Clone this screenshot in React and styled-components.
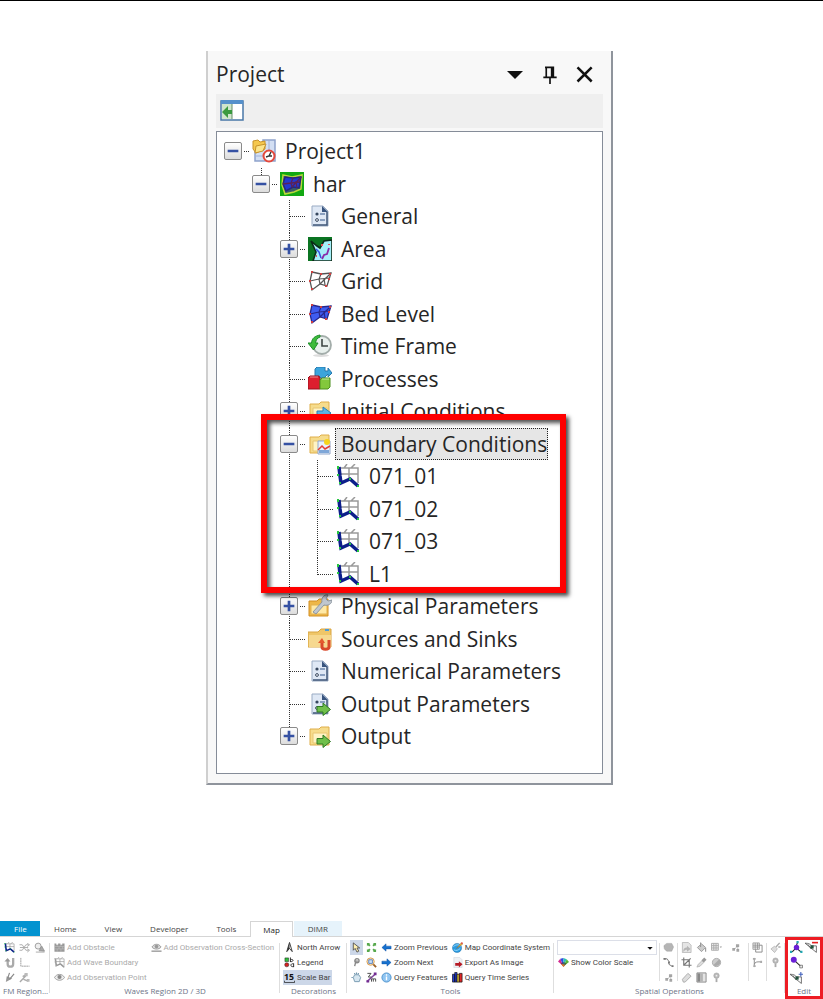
import { useState } from "react";
import styled, { createGlobalStyle, css } from "styled-components";

const treeItems = [
  { name: "Project1", depth: 0, icon: "project", toggle: "minus", last: true },
  { name: "har", depth: 1, icon: "model", toggle: "minus", last: true },
  { name: "General", depth: 2, icon: "sheet" },
  { name: "Area", depth: 2, icon: "area", toggle: "plus" },
  { name: "Grid", depth: 2, icon: "grid" },
  { name: "Bed Level", depth: 2, icon: "bed" },
  { name: "Time Frame", depth: 2, icon: "time" },
  { name: "Processes", depth: 2, icon: "cubes" },
  { name: "Initial Conditions", depth: 2, icon: "initial", toggle: "plus" },
  { name: "Boundary Conditions", depth: 2, icon: "boundary", toggle: "minus" },
  { name: "071_01", depth: 3, icon: "wave" },
  { name: "071_02", depth: 3, icon: "wave" },
  { name: "071_03", depth: 3, icon: "wave" },
  { name: "L1", depth: 3, icon: "wave", last: true },
  { name: "Physical Parameters", depth: 2, icon: "physical", toggle: "plus" },
  { name: "Sources and Sinks", depth: 2, icon: "sources" },
  { name: "Numerical Parameters", depth: 2, icon: "sheet" },
  { name: "Output Parameters", depth: 2, icon: "sheetOut" },
  { name: "Output", depth: 2, icon: "output", toggle: "plus", last: true },
];

const tabs = ["Home", "View", "Developer", "Tools"];

const Folder = () => (
  <>
    <path d="M2 5h9l2-2h8v18H2z" fill="#f6dc8c" stroke="#dfae4a" />
    <path d="M5 9h14v10H5z" fill="#fff3c4" stroke="#e8c673" />
  </>
);

const Sheet = () => (
  <>
    <path d="M4 2h11l5 5v15H4z" fill="#dfe8f5" stroke="#9aabc4" />
    <path d="M5 21h14V8" fill="none" stroke="#3f5577" strokeWidth="1.5" />
    <path d="M14 2l6 6h-6z" fill="#39557f" />
    <circle cx="9" cy="10" r="1.6" fill="#37475f" />
    <circle cx="9" cy="16" r="1.4" fill="#fff" stroke="#37475f" />
    <path d="M12 10h5M12 16h5" stroke="#6d86ad" strokeWidth="1.3" />
  </>
);

const GreenArrow = () => (
  <path
    d="M9 14.5h6V11l7.5 6.5-7.5 6v-3.5H9z"
    fill="#6fbf4a"
    stroke="#2f7a24"
  />
);

const Mesh = ({ fill, line }) => (
  <>
    <path d="M4 3l9 2 10-1-4 13-7-2-8 6-2-9z" fill={fill} stroke={line} strokeWidth="1.3" />
    <path
      d="M2 12l9-2 11-1M13 5l-2 5 1 5M23 4L12 15M16 9l1 7"
      fill="none"
      stroke={line}
      strokeWidth="1.2"
    />
    <path
      d="M3 2h2v2H3zM21 4h2v2h-2zM3 19h2v2H3zM12 4h2v2h-2zM17 16h2v2h-2zM1 11h2v2H1zM20 9h2v2h-2z"
      fill="#d04040"
    />
  </>
);

const Wave = ({ line = "#0c1f8a", dot = "#27c840" }) => (
  <>
    <path
      d="M4 4h18v15M4 10h18M13 4v11M8 4l3-4M15 4l4-4"
      fill="none"
      stroke="#9a9a9a"
      strokeWidth="1.5"
    />
    <path d="M3 3l1 9 1 7 9-4 8 7" fill="none" stroke={line} strokeWidth="3.5" />
    <path d="M1 2h2v3H1zM3 18h2v2H3zM13 14h2v2h-2zM21 21h2v2h-2zM1 10h2v2H1z" fill={dot} />
  </>
);

const Pointer = ({ turn, fill }) => (
  <path d="M2 12l9-8v5h11v6H11v5z" transform={turn} fill={fill} stroke="#0d4fa0" />
);

const Bulb = () => (
  <>
    <circle cx="12" cy="8" r="6" fill="#b9b9b9" stroke="#999" />
    <circle cx="12" cy="8" r="2" fill="#eee" />
    <path d="M10 14h4v8h-4z" fill="#aaa" />
  </>
);

const Dots = () => (
  <>
    <path d="M13 5h7v6h-7zM14 15h6v6h-6zM5 13h6v6H5z" fill="#a5a5a5" />
    <path d="M11 15l4-5M17 11v5" stroke="#777" />
  </>
);

const drawings = {
  project: (
    <>
      <path d="M11 1h12v21H3V11h8z" fill="#d3dff3" stroke="#8ea3cc" strokeWidth="1.5" />
      <path d="M17 2v19M4 17h18" stroke="#9fb1d8" />
      <path d="M1 2l5-1 2 2 5-1v8l-9 4-3-4z" fill="#f5c84e" stroke="#c7932c" />
      <path d="M4 7l10-2-3 7-8 2z" fill="#fce58b" stroke="#c7932c" />
      <circle cx="17" cy="17" r="5.5" fill="#fff" stroke="#e4483c" strokeWidth="2" />
      <path d="M14 18l3-1 2-4M17 17h3" fill="none" stroke="#333" strokeWidth="1.4" />
    </>
  ),
  model: (
    <>
      <path d="M0 0h24v24H0z" fill="#12a812" />
      <path d="M3 3l9 2 10-2-1 14-7 3-9 2-3-9z" fill="#3a5a66" stroke="#b9d83a" strokeWidth="1.5" />
      <path d="M5 5l8 1 8-1-2 11-6-1-7 4-3-7z" fill="#2439cf" stroke="#26267c" strokeWidth="1.5" />
      <path d="M3 12l8-1 9-1M13 6l-2 5 1 4M21 5l-9 10M16 9l1 7" fill="none" stroke="#5a2258" strokeWidth="1.3" />
    </>
  ),
  sheet: <Sheet />,
  area: (
    <>
      <path d="M0 0h24v24H0z" fill="#0b7422" />
      <path d="M3 4l6 5 3 2 4-7 8-1v21H5l3-9z" fill="#a6effa" stroke="#0c2b18" strokeWidth="1.6" />
      <path d="M8 12l3 3 2 6" fill="none" stroke="#3455e0" strokeWidth="1.5" />
      <path d="M21 11l-2 6-3 1-2 4" fill="none" stroke="#8a2ba8" strokeWidth="1.8" />
      <path d="M13 7h2v2h-2zM20 7h2v1h-2zM8 18h1v2H8z" fill="#ea4d58" />
    </>
  ),
  grid: <Mesh fill="none" line="#555" />,
  bed: <Mesh fill="#3f5cf0" line="#27278a" />,
  time: (
    <>
      <ellipse cx="13" cy="21.5" rx="8" ry="1.5" fill="#ddd" />
      <circle cx="14" cy="11" r="9" fill="#e8f0ed" stroke="#a3adaa" strokeWidth="1.8" />
      <path d="M14 5v7h6" fill="none" stroke="#3d4644" strokeWidth="1.6" />
      <path d="M12 1C7 2 4 4 3.5 9H0l5.5 7L10 9H7.5C8 6 9 4 12 3z" fill="#3dbb3b" stroke="#1e8f2b" />
    </>
  ),
  cubes: (
    <>
      <path d="M7 2l2-2h8v4h3V1l4 5-4 4V7l-3 3v1H7z" fill="#3ba4dc" stroke="#2779ae" />
      <path d="M0 11l2-2h9l1 2v11H0z" fill="#dc1f2e" stroke="#97101d" />
      <path d="M12 13l2-2h8v9l-2 2h-8z" fill="#83c83c" stroke="#4d8f1f" />
      <path d="M2 10h8M14 12h7" stroke="#fff" strokeOpacity=".5" />
    </>
  ),
  initial: (
    <>
      <Folder />
      <path d="M9 12h6V8l8 6-8 7v-5H9z" fill="#5cb6e8" stroke="#2a7fb8" />
    </>
  ),
  boundary: (
    <>
      <Folder />
      <path d="M10 9h12v13H10z" fill="#e8f1fc" stroke="#93a8cc" />
      <path d="M11 18h10v3H11z" fill="#7fa7d8" />
      <path d="M10 18l4-4 3 3 5-3" fill="none" stroke="#e23b35" strokeWidth="1.5" />
      <circle cx="19" cy="10" r="3" fill="#f6d31c" />
    </>
  ),
  wave: <Wave />,
  physical: (
    <>
      <path d="M1 7h8l2-2h9v17H1z" fill="#eeb748" stroke="#d38f22" />
      <path d="M3 11h16v9H3z" fill="#ffe9a6" stroke="#e2b14f" />
      <path d="M5 18l9-10c-1-4 2-8 6-7l-2 4 2 2 4-1c0 4-4 6-8 5L8 20z" fill="#c0c7cf" stroke="#8d97a1" />
    </>
  ),
  sources: (
    <>
      <path d="M0 5h10l3-3h10v18H0z" fill="#efc669" stroke="#d9a543" />
      <path d="M1 8h22v12H1z" fill="#f6d88f" />
      <path d="M17 3h4" stroke="#4d9cd8" strokeWidth="2" />
      <path d="M14 16v4c0 3 7 3 7 0v-7" fill="none" stroke="#d9492b" strokeWidth="3" />
      <path d="M10 16l4-5 3 5z" fill="#e4592e" />
    </>
  ),
  sheetOut: (
    <>
      <Sheet />
      <GreenArrow />
    </>
  ),
  output: (
    <>
      <Folder />
      <GreenArrow />
    </>
  ),
  collapse: (
    <>
      <path d="M1 2h22v19H1z" fill="#fff" stroke="#4a78a8" strokeWidth="1.5" />
      <path d="M1 1h22v4H1z" fill="#5590cb" />
      <path d="M2 5h10v15H2z" fill="#cfe5cc" />
      <path d="M12 5v15" stroke="#668f6b" />
      <path d="M2 13l6-6v4h4v4H8v4z" fill="#3a9a3f" />
    </>
  ),
  down: <path d="M4 9h16l-8 8z" fill="#111" />,
  pin: (
    <path d="M6 4h11M7.5 4v12M14 4v12M16 4v12M4 16h16M12 16v8" fill="none" stroke="#111" strokeWidth="2" />
  ),
  close: <path d="M3 4l17 17M20 4L3 21" fill="none" stroke="#111" strokeWidth="3" />,
  shuffle: (
    <path d="M1 6h6l8 12h6M1 18h6l8-12h6M18 3l5 3-5 4M18 15l5 3-5 4M2 12h18" fill="none" stroke="#aaa" strokeWidth="2" />
  ),
  dredge: (
    <>
      <circle cx="9" cy="9" r="6.5" fill="#eee" stroke="#999" strokeWidth="2" />
      <path d="M11 19l6-10 6 11zM4 22h19" fill="#aaa" stroke="#888" strokeWidth="1.5" />
    </>
  ),
  magnet: (
    <>
      <path d="M8 6v9c0 8 12 8 12 0V2" fill="none" stroke="#aaa" strokeWidth="5" />
      <path d="M1 10l7-8 6 8z" fill="#999" />
    </>
  ),
  axes: <path d="M4 2v18h19" fill="none" stroke="#999" strokeWidth="2" strokeDasharray="4 1" />,
  brush: (
    <>
      <path d="M4 22l2-13 12 5z" fill="#999" />
      <path d="M8 14l4-12M12 16L22 4" stroke="#888" strokeWidth="2.5" />
    </>
  ),
  tools: (
    <>
      <path d="M2 22L15 8M8 10l8-5M10 16l10 4" fill="none" stroke="#aaa" strokeWidth="3" />
      <path d="M12 2h7v7h-7zM17 15h6v6h-6z" fill="#bbb" />
    </>
  ),
  obstacle: (
    <>
      <path d="M1 3h4v3h4V3h5v3h4V3h5v18H1z" fill="#999" />
      <path d="M1 10h22M1 15h22M7 6v4M15 6v4M11 10v5M19 10v5M7 15v6M15 15v6" stroke="#ccc" />
    </>
  ),
  waveOff: <Wave line="#999" dot="#bbb" />,
  eye: (
    <>
      <path d="M1 12c5-9 17-9 22 0-5 8-17 8-22 0z" fill="#eee" stroke="#999" strokeWidth="2" />
      <circle cx="12" cy="11" r="4.5" fill="#888" />
    </>
  ),
  eyeLine: (
    <>
      <path d="M2 11c5-8 15-8 20 0-5 6-15 6-20 0z" fill="#ddd" stroke="#999" strokeWidth="2" />
      <circle cx="12" cy="10" r="4" fill="#999" />
      <path d="M1 20h22" stroke="#999" strokeWidth="3" />
    </>
  ),
  north: (
    <>
      <path d="M12 1l6 20-6-7-6 7z" fill="#fff" stroke="#333" strokeWidth="2" />
      <path d="M12 1v13l-6 7z" fill="#333" />
    </>
  ),
  legend: (
    <>
      <path d="M2 2h8v8H2z" fill="#2fbf3a" stroke="#111" />
      <circle cx="6" cy="17" r="4.5" fill="#d42323" stroke="#111" />
      <path d="M14 1v10M14 6c7-3 8 5 0 4M21 14v8M21 15c-7-2-9 7 0 6" fill="none" stroke="#222" strokeWidth="2" />
    </>
  ),
  scale: (
    <>
      <text x="0" y="17" fontFamily="Open Sans, sans-serif" fontSize="19" fontWeight="700" fill="#111">
        15
      </text>
      <path d="M1 19v4h22v-4" fill="none" stroke="#111" strokeWidth="1.5" />
    </>
  ),
  cursor: <path d="M5 2v16l4-4 4 8 4-2-4-7h6z" fill="#fff0b0" stroke="#444" strokeWidth="1.8" />,
  lasso: (
    <>
      <circle cx="13" cy="8" r="4.5" fill="#eee" stroke="#888" strokeWidth="3" />
      <path d="M10 12l-2 8M8 9h7" stroke="#888" strokeWidth="3" />
    </>
  ),
  hand: (
    <>
      <path d="M5 12l3-6h9l4 6-3 9H8z" fill="#d6e6f0" stroke="#7397ae" strokeWidth="2" />
      <path d="M8 5V2m4 3V1m4 4V2M4 12H1" stroke="#7397ae" strokeWidth="2.5" />
    </>
  ),
  extents: (
    <path
      d="M2 2h7L7 4l3 3-3 3-3-3-2 2zM22 2v7l-2-2-3 3-3-3 3-3-2-2zM2 22v-7l2 2 3-3 3 3-3 3 2 2zM22 22h-7l2-2-3-3 3-3 3 3 2-2z"
      fill="#56a84c"
    />
  ),
  zoomBox: (
    <>
      <circle cx="10" cy="10" r="8" fill="#f7e3bd" stroke="#d7994c" strokeWidth="2" />
      <path d="M16 16l6 6" stroke="#9a622a" strokeWidth="4" />
      <path d="M6 6h8v8H6z" fill="#c9dff8" stroke="#5c83c0" strokeWidth="2" />
    </>
  ),
  measure: (
    <>
      <path d="M2 21L21 4" stroke="#80449d" strokeWidth="3" />
      <path d="M1 18h6v5H1zM17 1h6v6h-6z" fill="#722c91" />
      <path d="M3 3h8l-6 8h7M12 21v-6h4v6m0-6h5v6" fill="none" stroke="#444" strokeWidth="2" />
    </>
  ),
  previous: <Pointer fill="#1671cf" />,
  next: <Pointer fill="#1671cf" turn="rotate(180 12 12)" />,
  info: (
    <>
      <circle cx="12" cy="12" r="10" fill="#8fc5f2" stroke="#4b91cb" strokeWidth="2" />
      <path d="M12 5v3M12 10v8" stroke="#fff" strokeWidth="3" />
    </>
  ),
  globe: (
    <>
      <circle cx="11" cy="13" r="10" fill="#2c9be0" stroke="#1b6ca5" />
      <path d="M3 10c6-5 11-5 16-1M4 17c5 3 10 1 14-3" fill="none" stroke="#96dcff" strokeWidth="2" />
      <path d="M10 14L20 2l3 3z" fill="#f5b735" stroke="#8b6232" />
      <path d="M19 2l3-2 2 3-2 2z" fill="#df4538" />
    </>
  ),
  export: (
    <>
      <path d="M4 1h13l5 5v17H4z" fill="#eef1f5" stroke="#c4cad2" />
      <path d="M7 13h8V9l8 7-8 7v-4H7z" fill="#b61b26" />
    </>
  ),
  series: (
    <>
      <path d="M1 5h5v17H1zM6 1h5v21H6z" fill="#233bd4" stroke="#111" strokeWidth="1.5" />
      <path d="M11 5h5v17h-5z" fill="#e3c532" stroke="#111" strokeWidth="1.5" />
      <path d="M16 3h6v19h-6z" fill="#df2727" stroke="#111" strokeWidth="1.5" />
    </>
  ),
  colors: (
    <>
      <path d="M12 20L0 10l5-6z" fill="#d32b91" />
      <path d="M12 20L5 4l7-2z" fill="#3149e0" />
      <path d="M12 20V2l7 3z" fill="#2cc0b7" />
      <path d="M12 20l7-15 5 6z" fill="#56b438" />
      <path d="M6 14l6-3 7 3-7 8z" fill="#333" fillOpacity=".6" />
      <path d="M7 15l5 7 3-5z" fill="#ed7821" />
    </>
  ),
  polygon: <path d="M2 8l6-5h11l4 8-4 9H8L3 15z" fill="#b5b5b5" stroke="#999" />,
  polyline: (
    <>
      <path d="M3 4h6l4 6v6l8 5" fill="none" stroke="#777" strokeWidth="2" />
      <path d="M1 2h5v4H1zM11 10h4v4h-4zM19 18h4v4h-4z" fill="#777" />
    </>
  ),
  dots: <Dots />,
  importFile: (
    <>
      <path d="M3 1h13l6 6v16H3z" fill="#e5e5e5" stroke="#aaa" strokeWidth="1.5" />
      <path d="M5 22c0-8 3-10 8-10V8l8 7-8 6v-4c-4 0-5 1-8 5z" fill="#b5b5b5" />
    </>
  ),
  crop: <path d="M6 1v17h17M1 6h17v17M6 18L21 3" fill="none" stroke="#777" strokeWidth="2.5" />,
  eraser: <path d="M3 16L15 3l7 6-13 13H5z" fill="#ddd" stroke="#aaa" strokeWidth="2" />,
  bucket: (
    <>
      <path d="M3 12l9-8 9 8-9 9z" fill="#ccc" stroke="#999" strokeWidth="2" />
      <path d="M10 1v10M21 13v8" stroke="#999" strokeWidth="2.5" />
    </>
  ),
  dropper: (
    <>
      <path d="M2 22l3-6 8-8 4 4-8 8z" fill="#ddd" stroke="#aaa" strokeWidth="1.5" />
      <path d="M12 7l6-6 5 5-6 6z" fill="#999" />
    </>
  ),
  gradient: (
    <>
      <path d="M2 2h20v20H2z" fill="#e4e4e4" stroke="#888" strokeWidth="2" />
      <path d="M3 3h6v18H3z" fill="#888" />
      <path d="M9 3h6v18H9z" fill="#b4b4b4" />
    </>
  ),
  table: (
    <>
      <path d="M1 3h15v15H1zM1 8h15M1 13h15M6 3v15M11 3v15" fill="#eee" stroke="#aaa" strokeWidth="2" />
      <path d="M19 10h5l-2.5 3z" fill="#999" />
    </>
  ),
  contrast: (
    <>
      <circle cx="12" cy="12" r="9" fill="#ccc" stroke="#aaa" strokeWidth="2" />
      <path d="M5 18L18 5c7 7-3 19-13 13z" fill="#aaa" />
    </>
  ),
  bulb: <Bulb />,
  layers: (
    <>
      <path d="M2 2h14v14H2zM2 7h14M2 11h14M7 2v14M12 2v14" fill="#eee" stroke="#888" strokeWidth="1.5" />
      <path d="M16 7h6v15H8v-6" fill="none" stroke="#888" strokeWidth="2" />
    </>
  ),
  branch: (
    <>
      <path d="M5 2v20M5 16c1-6 8-6 16-5" fill="none" stroke="#888" strokeWidth="2" />
      <path d="M2 2h6v4H2zM3 18h5v4H3zM18 8h4v5h-4z" fill="#aaa" />
    </>
  ),
  clean: (
    <>
      <path d="M2 15l8-6 6 6-6 8z" fill="#ddd" stroke="#aaa" strokeWidth="1.5" />
      <path d="M13 11l8-9M18 11h5" stroke="#aaa" strokeWidth="3" />
    </>
  ),
  nodeTree: (
    <>
      <path d="M14 2l-4 12M10 14l-6 6M12 13l8 7" stroke="#222" strokeWidth="2" />
      <circle cx="12" cy="12" r="5" fill="#6a1fd6" />
      <path d="M12 0h4v4h-4zM0 18h4v4H0zM19 18h4v4h-4z" fill="#22a9b3" />
    </>
  ),
  nodeLink: (
    <>
      <path d="M8 8l13 12" stroke="#222" strokeWidth="2" />
      <circle cx="7" cy="7" r="5.5" fill="#6a1fd6" />
      <path d="M18 17h5v5h-5z" fill="#eee" stroke="#333" />
    </>
  ),
  nodeRemove: (
    <>
      <path d="M0 4c7 0 10 2 12 5h9v12zM5 6l7 9" fill="none" stroke="#555" strokeWidth="1.5" />
      <path d="M10 8h6v6h-6z" fill="#23523d" />
      <path d="M13 3h11" stroke="#e32020" strokeWidth="3" />
    </>
  ),
  nodeAdd: (
    <>
      <path d="M0 6c7 0 10 2 12 5h9v12zM5 8l7 9" fill="none" stroke="#555" strokeWidth="1.5" />
      <path d="M10 10h6v6h-6z" fill="#23523d" />
      <path d="M16 6h8M20 2v8" stroke="#4261bd" strokeWidth="2" />
    </>
  ),
};

function Icon({ name, size = 24 }) {
  return (
    <Drawing viewBox="0 0 24 24" $size={size} aria-hidden="true">
      {drawings[name]}
    </Drawing>
  );
}

function Guide({ vertical, half, branch }) {
  return (
    <GuideCell viewBox="0 0 28 33" aria-hidden="true">
      {vertical && <path d={half ? "M14.5 0V17" : "M14.5 0V33"} />}
      {branch && <path d="M15 16.5H30" />}
    </GuideCell>
  );
}

function TreeRow({ item, selected, onSelect }) {
  const guides = [];
  for (let level = 0; level < item.depth; level++) {
    guides.push(<Guide key={level} vertical={level === 2} />);
  }

  return (
    <Row role="treeitem" aria-level={item.depth + 1} aria-selected={selected}>
      {guides}
      <Branch>
        <Guide vertical={item.depth > 0} half={item.last} branch />
        {item.toggle && (
          <Toggle aria-label={`Toggle ${item.name}`}>
            <svg viewBox="0 0 18 18" width="18" height="18">
              <path d="M3 9h12" />
              {item.toggle === "plus" && <path d="M9 3v12" />}
            </svg>
          </Toggle>
        )}
      </Branch>
      <RowIcon>
        <Icon name={item.icon} />
      </RowIcon>
      <RowLabel $selected={selected} onClick={onSelect}>
        {item.name}
      </RowLabel>
    </Row>
  );
}

function IconColumn({ icons, active, size = 11 }) {
  return (
    <Column>
      {icons.map((icon) => (
        <Tool key={icon} aria-label={icon} $active={icon === active}>
          <Icon name={icon} size={size} />
        </Tool>
      ))}
    </Column>
  );
}

function LabelColumn({ items, disabled, active }) {
  return (
    <Column>
      {items.map(([icon, text]) => (
        <Tool key={text} disabled={disabled} $active={text === active}>
          <Icon name={icon} size={11} />
          {text}
        </Tool>
      ))}
    </Column>
  );
}

function ProjectPanel() {
  const [selected, setSelected] = useState("Boundary Conditions");

  return (
    <Panel>
      <PanelHeader>
        <PanelTitle>Project</PanelTitle>
        <HeaderButton aria-label="Window position">
          <Icon name="down" />
        </HeaderButton>
        <HeaderButton aria-label="Auto hide">
          <Icon name="pin" size={20} />
        </HeaderButton>
        <HeaderButton aria-label="Close">
          <Icon name="close" size={20} />
        </HeaderButton>
      </PanelHeader>
      <PanelToolbar>
        <HeaderButton aria-label="Collapse all">
          <Icon name="collapse" />
        </HeaderButton>
      </PanelToolbar>
      <Tree role="tree" aria-label="Project">
        {treeItems.map((item) => (
          <TreeRow
            key={item.name}
            item={item}
            selected={item.name === selected}
            onSelect={() => setSelected(item.name)}
          />
        ))}
        <Highlight />
      </Tree>
    </Panel>
  );
}

function Ribbon() {
  return (
    <RibbonBar>
      <Tabs>
        <FileTab>File</FileTab>
        {tabs.map((tab) => (
          <Tab key={tab}>{tab}</Tab>
        ))}
        <ActiveTab>Map</ActiveTab>
        <ContextTab>DIMR</ContextTab>
      </Tabs>
      <Groups>
        <Group>
          <GroupBody>
            <IconColumn icons={["wave", "magnet", "brush"]} />
            <IconColumn icons={["shuffle", "axes", "tools"]} />
            <IconColumn icons={["dredge"]} />
          </GroupBody>
          <GroupName>FM Region...</GroupName>
        </Group>
        <Group>
          <GroupBody>
            <LabelColumn
              disabled
              items={[
                ["obstacle", "Add Obstacle"],
                ["waveOff", "Add Wave Boundary"],
                ["eye", "Add Observation Point"],
              ]}
            />
            <LabelColumn disabled items={[["eyeLine", "Add Observation Cross-Section"]]} />
          </GroupBody>
          <GroupName>Waves Region 2D / 3D</GroupName>
        </Group>
        <Group>
          <GroupBody>
            <LabelColumn
              active="Scale Bar"
              items={[
                ["north", "North Arrow"],
                ["legend", "Legend"],
                ["scale", "Scale Bar"],
              ]}
            />
          </GroupBody>
          <GroupName>Decorations</GroupName>
        </Group>
        <Group>
          <GroupBody>
            <IconColumn icons={["cursor", "lasso", "hand"]} active="cursor" />
            <IconColumn icons={["extents", "zoomBox", "measure"]} />
            <LabelColumn
              items={[
                ["previous", "Zoom Previous"],
                ["next", "Zoom Next"],
                ["info", "Query Features"],
              ]}
            />
            <LabelColumn
              items={[
                ["globe", "Map Coordinate System"],
                ["export", "Export As Image"],
                ["series", "Query Time Series"],
              ]}
            />
          </GroupBody>
          <GroupName>Tools</GroupName>
        </Group>
        <Group>
          <GroupBody>
            <ScaleColumn>
              <SelectBox>
                <select aria-label="Color scale layer">
                  <option value="" />
                </select>
                <Icon name="down" size={8} />
              </SelectBox>
              <LabelColumn items={[["colors", "Show Color Scale"]]} />
            </ScaleColumn>
            <Divider />
            <IconColumn icons={["polygon", "polyline", "dots"]} />
            <Divider />
            <IconColumn icons={["importFile", "crop", "eraser"]} />
            <IconColumn icons={["bucket", "dropper", "gradient"]} />
            <IconColumn icons={["table", "contrast", "bulb"]} />
            <Spacer />
            <IconColumn icons={["dots"]} />
            <Spacer />
            <Divider />
            <IconColumn icons={["layers", "branch"]} />
            <Divider />
            <IconColumn icons={["clean", "bulb"]} />
          </GroupBody>
          <GroupName>Spatial Operations</GroupName>
        </Group>
        <EditGroup>
          <GroupBody>
            <IconColumn size={13} icons={["nodeTree", "nodeLink", "nodeAdd"]} />
            <IconColumn size={13} icons={["nodeRemove"]} />
          </GroupBody>
          <GroupName>Edit</GroupName>
        </EditGroup>
      </Groups>
    </RibbonBar>
  );
}

function App() {
  return (
    <>
      <GlobalStyle />
      <Page>
        <PanelArea>
          <ProjectPanel />
        </PanelArea>
        <Ribbon />
      </Page>
    </>
  );
}

export default App;

// Styled Components
const GlobalStyle = createGlobalStyle`
  * {
    box-sizing: border-box;
  }

  body {
    margin: 0;
    background: #fff;
    color: #262626;
    font-family: "Open Sans", "Noto Sans", sans-serif;
  }

  button, select {
    margin: 0;
    padding: 0;
    border: none;
    background: none;
    color: inherit;
    font: inherit;
  }
`;

const Page = styled.main`
  display: flex;
  flex-direction: column;
  gap: 136px;
  padding-top: 50px;
  border-top: 1px solid #000;
`;

const PanelArea = styled.div`
  display: flex;
  justify-content: center;
  padding-right: 4px;
`;

const Drawing = styled.svg`
  display: block;
  flex: none;
  width: ${(props) => props.$size}px;
  height: ${(props) => props.$size}px;
`;

const Panel = styled.section`
  width: 407px;
  max-width: 100%;
  padding: 0 8px 9px;
  background: #f8f8f8;
  border: 2px solid #8f949c;
  border-top: none;
  border-left-color: #cfcfcf;
  font-size: 21px;
`;

const PanelHeader = styled.header`
  display: flex;
  align-items: center;
  gap: 11px;
  height: 43px;
  padding: 2px 6px 0 0;
`;

const PanelTitle = styled.h1`
  flex: 1;
  margin: 0;
  font-size: 21px;
  font-weight: 400;
`;

const HeaderButton = styled.button`
  display: grid;
  place-items: center;
  width: 24px;
  height: 24px;
`;

const PanelToolbar = styled.div`
  display: flex;
  align-items: center;
  height: 34px;
  margin-bottom: 3px;
  padding-left: 4px;
  background: #efefef;
`;

const Tree = styled.div`
  position: relative;
  display: grid;
  grid-auto-rows: 33px 32px;
  padding: 3px 2px 20px;
  background: #fff;
  border: 1px solid #858c98;
`;

const Row = styled.div`
  display: flex;
  overflow: hidden;
`;

const Branch = styled.div`
  display: grid;
  width: 28px;

  > * {
    grid-area: 1 / 1;
  }
`;

const GuideCell = styled.svg`
  flex: none;
  width: 28px;
  height: 33px;
  overflow: visible;
  fill: none;
  stroke: #333;
  stroke-dasharray: 1 1;
`;

const Toggle = styled.button`
  justify-self: center;
  width: 22px;
  height: 18px;
  margin-top: 7px;
  padding: 0 2px;
  background: #fff;

  svg {
    display: block;
    background: linear-gradient(#fff, #dcdcdc);
    border: 1px solid #8a8a8a;
    border-radius: 2px;
    fill: none;
    stroke: #3551a3;
    stroke-width: 3;
  }
`;

const RowIcon = styled.span`
  padding: 4px 3px 0 5px;
`;

const RowLabel = styled.span`
  height: 32px;
  padding: 0 1px 0 6px;
  line-height: 33px;
  white-space: nowrap;
  cursor: default;

  ${(props) =>
    props.$selected &&
    css`
      background: #e6e6e6;
      outline: 1px dotted #222;
      outline-offset: -1px;
    `}
`;

const Highlight = styled.div`
  position: absolute;
  top: 282px;
  left: 44px;
  width: 305px;
  height: 179px;
  border: 6px solid #fe0000;
  box-shadow:
    3px 3px 4px rgba(0, 0, 0, 0.7),
    inset 3px 3px 4px rgba(0, 0, 0, 0.7);
  pointer-events: none;
`;

const RibbonBar = styled.section`
  color: #444;
  font-size: 8px;
  line-height: 10px;
`;

const Tabs = styled.nav`
  display: flex;
  height: 16px;
  border-bottom: 1px solid #d5d5d5;
`;

const Tab = styled.button`
  padding: 0 14px;
`;

const FileTab = styled(Tab)`
  width: 40px;
  background: #0393d0;
  color: #fff;
`;

const ActiveTab = styled(Tab)`
  height: 16px;
  padding: 0 12px;
  background: #fff;
  border: 1px solid #d5d5d5;
  border-bottom: none;
  color: #222;
`;

const ContextTab = styled(Tab)`
  margin-left: 1px;
  background: #e6f3fb;
`;

const Groups = styled.div`
  display: grid;
  grid-template-columns: 50px 1fr 67px 207px 231px 38px;
  height: 62px;
`;

const Group = styled.div`
  display: flex;
  flex-direction: column;
  min-width: 0;
  padding: 3px 3px 3px;
  background: linear-gradient(#dedede, #dedede) right 6px / 1px 50px no-repeat;
`;

const GroupBody = styled.div`
  display: flex;
  flex: 1;
  gap: 2px;
`;

const GroupName = styled.div`
  color: #6d7488;
  text-align: center;
  white-space: nowrap;
`;

const EditGroup = styled(Group)`
  padding: 0 1px;
  background: none;
  border: 3px solid #ed1c24;

  ${GroupBody} {
    gap: 0;
  }
`;

const Column = styled.div`
  display: grid;
  grid-auto-rows: 15px;
  justify-items: start;
  align-content: start;
`;

const Tool = styled.button`
  display: flex;
  align-items: center;
  gap: 2px;
  height: 15px;
  padding: 0 1px;
  font-family: Roboto, "Open Sans", sans-serif;
  white-space: nowrap;

  &:disabled {
    color: #aaa;
  }

  ${(props) =>
    props.$active &&
    css`
      background: #ccd7e8;
    `}
`;

const ScaleColumn = styled.div`
  width: 100px;
`;

const SelectBox = styled.div`
  display: grid;
  align-items: center;
  height: 15px;
  border: 1px solid #dcdfe8;

  > * {
    grid-area: 1 / 1;
  }

  select {
    width: 100%;
    height: 13px;
    appearance: none;
  }

  svg {
    justify-self: end;
    margin-right: 2px;
    pointer-events: none;
  }
`;

const Divider = styled.span`
  width: 1px;
  height: 38px;
  margin-top: 3px;
  background: #dedede;
`;

const Spacer = styled.span`
  flex: 1;
`;
